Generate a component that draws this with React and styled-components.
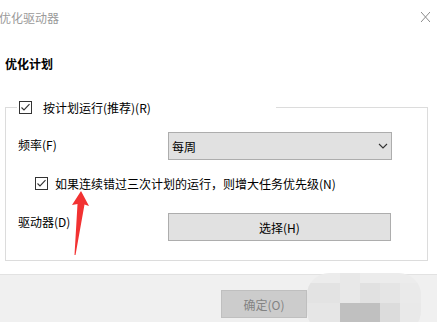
import React from 'react';
import styled, { createGlobalStyle } from 'styled-components';

const Global = createGlobalStyle`
  html, body { margin: 0; padding: 0; background: #fff; }
  body {
    font-family: "Microsoft YaHei", "Noto Sans CJK SC", "Noto Sans", sans-serif;
    font-size: 12px;
    color: #000;
  }
`;

const Window = styled.div`
  position: relative;
  width: 437px;
  height: 322px;
  overflow: hidden;
  background: #fff;
  display: flex;
  flex-direction: column;
`;

const TitleBar = styled.div`
  height: 36px;
  display: flex;
  align-items: center;
  justify-content: space-between;
  padding-right: 6px;
  color: #9a9a9a;
  font-size: 12px;
`;

const Title = styled.span`
  margin-left: -1px;
  margin-top: -1px;
`;

const CloseIcon = styled.svg`
  width: 9px;
  height: 10px;
  margin-top: -2px;
  margin-right: 1px;
`;

const Heading = styled.div`
  margin: 20px 0 0 5px;
  height: 16px;
  line-height: 16px;
  font-weight: bold;
`;

const Group = styled.div`
  margin: 35px 0 0 5px;
  padding: 0 0 19px 12px;
  width: 423px;
  box-sizing: border-box;
  border: 1px solid #dcdcdc;
`;

const Legend = styled.div`
  margin: -9px 0 0 -1px;
  width: 259px;
  height: 16px;
  box-sizing: border-box;
  padding-left: 2px;
  background: #fff;
  display: flex;
  align-items: center;
`;

const Box = styled.span`
  width: 13px;
  height: 13px;
  box-sizing: border-box;
  border: 1px solid #333;
  background: #fff;
  display: inline-flex;
  align-items: center;
  justify-content: center;
  flex-shrink: 0;
  margin-right: ${p => p.gap || 11}px;
`;

const CheckRow = styled.div`
  display: flex;
  align-items: center;
  height: 14px;
  margin: 16px 0 0 17px;
`;

const Row = styled.div`
  display: flex;
  align-items: ${p => p.align || 'center'};
  margin-top: ${p => p.top}px;
`;

const Label = styled.span`
  width: 150px;
  line-height: 16px;
  margin-top: ${p => p.offset || 0}px;
`;

const Select = styled.div`
  width: 224px;
  height: 28px;
  box-sizing: border-box;
  border: 1px solid #adadad;
  background: #e1e1e1;
  display: flex;
  align-items: center;
  justify-content: space-between;
  padding: 0 2px 0 3px;
`;

const Chevron = styled.svg`
  width: 10px;
  height: 6px;
  margin-right: 1px;
`;

const Button = styled.div`
  width: ${p => p.w}px;
  height: 28px;
  box-sizing: border-box;
  border: 1px solid ${p => (p.disabled ? '#bfbfbf' : '#adadad')};
  background: ${p => (p.disabled ? '#cccccc' : '#e1e1e1')};
  color: ${p => (p.disabled ? '#838383' : '#000')};
  display: flex;
  align-items: center;
  justify-content: center;
`;

const Footer = styled.div`
  position: relative;
  margin-top: 13px;
  flex: 1;
  background: #f0f0f0;
  border-top: 1px solid #e2e2e2;
  padding: 15px 0 0 221px;
`;

const Overlay = styled.svg`
  position: absolute;
  left: 0;
  top: 0;
  pointer-events: none;
`;

const Mosaic = styled.svg`
  position: absolute;
  left: 307px;
  top: -6px;
`;

const Check = () => (
  <svg width="11" height="11" viewBox="0 0 11 11">
    <path d="M1.5 5.5 L4 8 L9.5 2.2" fill="none" stroke="#333" strokeWidth="1.1" />
  </svg>
);

export default function App() {
  return (
    <>
      <Global />
      <Window>
        <TitleBar>
          <Title>优化驱动器</Title>
          <CloseIcon viewBox="0 0 9 10">
            <path d="M0 0 L9 10 M9 0 L0 10" stroke="#8a8a8a" strokeWidth="1" />
          </CloseIcon>
        </TitleBar>
        <Heading>优化计划</Heading>
        <Group>
          <Legend>
            <Box gap={11}><Check /></Box>
            按计划运行(推荐)(R)
          </Legend>
          <Row top={17}>
            <Label offset={-2}>频率(F)</Label>
            <Select>
              <span>每周</span>
              <Chevron viewBox="0 0 10 6">
                <path d="M1 1 L5 5 L9 1" fill="none" stroke="#333" strokeWidth="1.1" />
              </Chevron>
            </Select>
          </Row>
          <CheckRow>
            <Box gap={7}><Check /></Box>
            如果连续错过三次计划的运行，则增大任务优先级(N)
          </CheckRow>
          <Row top={23} align="flex-start">
            <Label offset={1}>驱动器(D)</Label>
            <Button w={223}>选择(H)</Button>
          </Row>
        </Group>
        <Footer>
          <Button w={86} disabled>确定(O)</Button>
          <Mosaic width="114" height="60" viewBox="0 0 114 60">
            <defs>
              <clipPath id="blob">
                <rect x="0" y="4" width="114" height="60" rx="22" ry="22" />
              </clipPath>
            </defs>
            <g clipPath="url(#blob)">
              <rect x="0" y="0" width="114" height="60" fill="#ececec" />
              <rect x="0" y="14" width="33" height="20" fill="#e3e3e3" />
              <rect x="33" y="4" width="20" height="30" fill="#e8e8e8" />
              <rect x="53" y="14" width="20" height="20" fill="#e1e1e1" />
              <rect x="73" y="14" width="20" height="20" fill="#e5e5e5" />
              <rect x="93" y="14" width="21" height="20" fill="#eaeaea" />
              <rect x="0" y="34" width="33" height="26" fill="#e6e6e6" />
              <rect x="33" y="34" width="40" height="26" fill="#c0c0c0" />
              <rect x="73" y="34" width="20" height="26" fill="#dcdcdc" />
              <rect x="93" y="34" width="21" height="26" fill="#e9e9e9" />
            </g>
          </Mosaic>
        </Footer>
        <Overlay width="437" height="322" viewBox="0 0 437 322">
          <polygon
            points="81,191 89,206 84.5,204.5 75.5,255 74.5,255 77.5,204 72,205"
            fill="#f23232"
          />
        </Overlay>
      </Window>
    </>
  );
}
